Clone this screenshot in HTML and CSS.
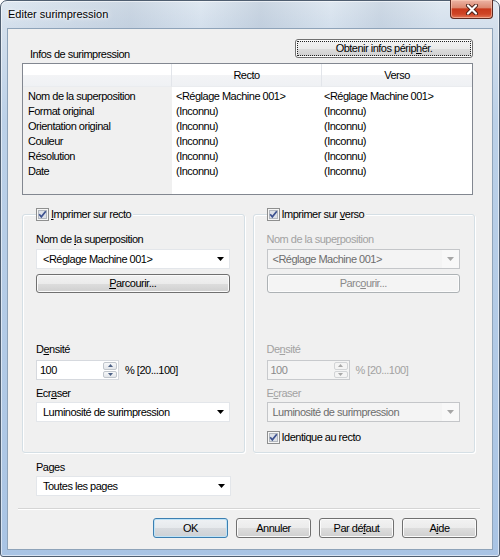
FILE: index.html
```html
<!DOCTYPE html>
<html lang="fr">
<head>
<meta charset="utf-8">
<title>Editer surimpression</title>
<link rel="stylesheet" href="styles.css">
</head>
<body>
<div class="window">
  <div class="titlebar">
    <span class="title">Editer surimpression</span>
    <div class="close">
      <svg width="14" height="11" viewBox="0 0 14 11"><path d="M3 1.5 L11 9.5 M11 1.5 L3 9.5" stroke="#4a1f17" stroke-width="4" stroke-linecap="round" fill="none"/><path d="M3 1.5 L11 9.5 M11 1.5 L3 9.5" stroke="#ffffff" stroke-width="2.2" stroke-linecap="round" fill="none"/></svg>
    </div>
  </div>
  <div class="client">
    <div class="info">
      <div class="info-head">
        <span class="info-label">Infos de surimpression</span>
        <button class="btn focus wide">Obtenir infos périp<u>h</u>ér.</button>
      </div>
      <div class="table">
        <div class="col col-labels">
          <div class="th"></div>
          <div class="tbody">
            <div class="td">Nom de la superposition</div>
            <div class="td">Format original</div>
            <div class="td">Orientation original</div>
            <div class="td">Couleur</div>
            <div class="td">Résolution</div>
            <div class="td">Date</div>
          </div>
        </div>
        <div class="col col-recto">
          <div class="th">Recto</div>
          <div class="tbody">
            <div class="td">&lt;Réglage Machine 001&gt;</div>
            <div class="td">(Inconnu)</div>
            <div class="td">(Inconnu)</div>
            <div class="td">(Inconnu)</div>
            <div class="td">(Inconnu)</div>
            <div class="td">(Inconnu)</div>
          </div>
        </div>
        <div class="col col-verso">
          <div class="th">Verso</div>
          <div class="tbody">
            <div class="td">&lt;Réglage Machine 001&gt;</div>
            <div class="td">(Inconnu)</div>
            <div class="td">(Inconnu)</div>
            <div class="td">(Inconnu)</div>
            <div class="td">(Inconnu)</div>
            <div class="td">(Inconnu)</div>
          </div>
        </div>
      </div>
    </div>

    <div class="groups">
      <div class="group">
        <div class="legend">
          <svg class="cb" width="13" height="13" viewBox="0 0 13 13"><rect x="0.5" y="0.5" width="12" height="12" fill="#f6f6f6" stroke="#8e8f8f"/><rect x="2.5" y="2.5" width="8" height="8" fill="#dde1e7" stroke="#b3b8bf"/><path d="M3.2 6.3 L5.3 8.8 L9.8 3.2" stroke="#3d5290" stroke-width="1.7" fill="none"/></svg>
          <span><u>I</u>mprimer sur recto</span>
        </div>
        <div class="lbl">Nom de <u>l</u>a superposition</div>
        <div class="combo">
          <span class="combo-text">&lt;Réglage Machine 001&gt;</span>
          <svg class="arrow" width="7" height="4" viewBox="0 0 7 4"><polygon points="0,0 7,0 3.5,4" fill="#000"/></svg>
        </div>
        <button class="btn full"><u>P</u>arcourir...</button>
        <div class="lbl lbl-dens">D<u>e</u>nsité</div>
        <div class="spin-row">
          <div class="spin">
            <span class="spin-val">100</span>
            <div class="spin-btns">
              <div class="sb"><svg width="5" height="3" viewBox="0 0 5 3"><polygon points="0,3 5,3 2.5,0" fill="#4d6185"/></svg></div>
              <div class="sb"><svg width="5" height="3" viewBox="0 0 5 3"><polygon points="0,0 5,0 2.5,3" fill="#4d6185"/></svg></div>
            </div>
          </div>
          <span class="unit">% [20...100]</span>
        </div>
        <div class="lbl lbl-ecr">Ecr<u>a</u>ser</div>
        <div class="combo combo-tight">
          <span class="combo-text">Luminosité de surimpression</span>
          <svg class="arrow" width="7" height="4" viewBox="0 0 7 4"><polygon points="0,0 7,0 3.5,4" fill="#000"/></svg>
        </div>
      </div>

      <div class="group group-right">
        <div class="legend">
          <svg class="cb" width="13" height="13" viewBox="0 0 13 13"><rect x="0.5" y="0.5" width="12" height="12" fill="#f6f6f6" stroke="#8e8f8f"/><rect x="2.5" y="2.5" width="8" height="8" fill="#dde1e7" stroke="#b3b8bf"/><path d="M3.2 6.3 L5.3 8.8 L9.8 3.2" stroke="#3d5290" stroke-width="1.7" fill="none"/></svg>
          <span>Imprimer sur <u>v</u>erso</span>
        </div>
        <div class="lbl dis">Nom de la supe<u>r</u>position</div>
        <div class="combo disabled">
          <span class="combo-text">&lt;Réglage Machine 001&gt;</span>
          <span class="arrow-box"><svg width="7" height="4" viewBox="0 0 7 4"><polygon points="0,0 7,0 3.5,4" fill="#a6a6a6"/></svg></span>
        </div>
        <button class="btn full disabled">Parc<u>o</u>urir...</button>
        <div class="lbl lbl-dens dis">De<u>n</u>sité</div>
        <div class="spin-row">
          <div class="spin disabled">
            <span class="spin-val">100</span>
            <div class="spin-btns">
              <div class="sb"><svg width="5" height="3" viewBox="0 0 5 3"><polygon points="0,3 5,3 2.5,0" fill="#a8a8a8"/></svg></div>
              <div class="sb"><svg width="5" height="3" viewBox="0 0 5 3"><polygon points="0,0 5,0 2.5,3" fill="#a8a8a8"/></svg></div>
            </div>
          </div>
          <span class="unit dis">% [20...100]</span>
        </div>
        <div class="lbl lbl-ecr dis">E<u>c</u>raser</div>
        <div class="combo combo-tight disabled">
          <span class="combo-text">Luminosité de surimpression</span>
          <span class="arrow-box"><svg width="7" height="4" viewBox="0 0 7 4"><polygon points="0,0 7,0 3.5,4" fill="#a6a6a6"/></svg></span>
        </div>
        <div class="check-row">
          <svg class="cb" width="13" height="13" viewBox="0 0 13 13"><rect x="0.5" y="0.5" width="12" height="12" fill="#f6f6f6" stroke="#8e8f8f"/><rect x="2.5" y="2.5" width="8" height="8" fill="#dde1e7" stroke="#b3b8bf"/><path d="M3.2 6.3 L5.3 8.8 L9.8 3.2" stroke="#3d5290" stroke-width="1.7" fill="none"/></svg>
          <span>Identique au recto</span>
        </div>
      </div>
    </div>

    <div class="pages">
      <div class="lbl-pages">Pa<u>g</u>es</div>
      <div class="combo combo-tight">
        <span class="combo-text">Toutes les pages</span>
        <svg class="arrow" width="7" height="4" viewBox="0 0 7 4"><polygon points="0,0 7,0 3.5,4" fill="#000"/></svg>
      </div>
    </div>

    <div class="separator"></div>

    <div class="actions">
      <button class="btn act default">OK</button>
      <button class="btn act">Annuler</button>
      <button class="btn act">Par dé<u>f</u>aut</button>
      <button class="btn act">A<u>i</u>de</button>
    </div>
  </div>
</div>
</body>
</html>
```

FILE: styles.css
```css
* { box-sizing: border-box; }

html, body {
  margin: 0;
  padding: 0;
}

body {
  width: 500px;
  height: 560px;
  background: #ffffff;
  font-family: "Liberation Sans", Arial, sans-serif;
  font-size: 11px;
  letter-spacing: -0.5px;
  color: #000;
  overflow: hidden;
}

u { text-decoration: underline; text-underline-offset: 1px; }

.window {
  width: 500px;
  height: 557px;
  border: 1px solid #4f5e70;
  border-radius: 7px 7px 3px 3px;
  background:
    linear-gradient(90deg, rgba(255,255,255,0) 0, rgba(120,140,165,0.18) 130px, rgba(255,255,255,0) 200px, rgba(120,140,165,0.2) 260px, rgba(255,255,255,0) 330px, rgba(120,140,165,0.16) 380px, rgba(255,255,255,0) 440px) top / 100% 27px no-repeat,
    linear-gradient(180deg, #dfe8f1 0, #d3dfec 28px, #bcd1e8 120px, #a9c4e4 100%);
  box-shadow: inset 0 0 0 1px rgba(255,255,255,0.55);
  padding: 0 6px 6px 6px;
  display: flex;
  flex-direction: column;
}

.titlebar {
  height: 27px;
  flex: none;
  display: flex;
  align-items: flex-start;
}

.title {
  padding: 6px 0 0 1px;
  font-size: 11px;
  line-height: 14px;
  letter-spacing: 0;
  color: #000;
  text-shadow: 0 0 6px #fff, 0 0 3px #fff;
}

.close {
  margin-left: auto;
  margin-top: -1px;
  width: 43px;
  height: 19px;
  border: 1px solid #5e2a21;
  border-top: none;
  border-radius: 0 0 4px 4px;
  background: linear-gradient(180deg, #ecb4a5 0%, #dd8a72 42%, #c8391c 50%, #cf4526 78%, #e27657 100%);
  box-shadow: inset 0 0 0 1px rgba(255,210,190,0.55);
  display: flex;
  align-items: center;
  justify-content: center;
}

.client {
  flex: 1;
  background: #f0f0f0;
  border: 1px solid #8ea3b9;
  display: flex;
  flex-direction: column;
}

/* ---------- info section ---------- */
.info {
  margin: 10px 19px 0 14px;
}

.info-head {
  height: 24px;
  display: flex;
  justify-content: space-between;
  align-items: flex-start;
}

.info-label {
  padding: 9px 0 0 8px;
  line-height: 12px;
}

.table {
  height: 132px;
  border: 1px solid #828790;
  background: #ffffff;
  display: flex;
}

.col { display: flex; flex-direction: column; }
.col-labels { width: 149px; background: #f0f0f0; }
.col-recto { width: 150px; }
.col-verso { flex: 1; }

.th {
  height: 23px;
  flex: none;
  background: linear-gradient(180deg, #ffffff 0%, #ffffff 50%, #f3f4f6 51%, #eff1f4 100%);
  border-right: 1px solid #e2e5ea;
  border-bottom: 1px solid #eaecef;
  text-align: center;
  line-height: 22px;
}
.col-verso .th { border-right: none; }

.tbody { padding-top: 2px; }

.td {
  line-height: 15px;
  white-space: nowrap;
}
.col-labels .td { padding-left: 5px; }
.col-recto .td { padding-left: 4px; }
.col-verso .td { padding-left: 2px; }

/* ---------- groups ---------- */
.groups {
  display: flex;
  gap: 8px;
  margin: 19px 17px 0 14px;
}

.group {
  flex: 1;
  height: 239px;
  border: 1px solid #d5dfe5;
  border-radius: 3px;
  box-shadow: inset 1px 1px 0 #ffffff, 1px 1px 0 #ffffff;
  padding: 0 14px 0 13px;
  display: flex;
  flex-direction: column;
}

.legend {
  align-self: flex-start;
  margin-top: -7px;
  height: 13px;
  display: flex;
  align-items: center;
  gap: 2px;
  padding-right: 2px;
  background: #f0f0f0;
  line-height: 13px;
}

.cb { flex: none; display: block; }

.lbl {
  line-height: 12px;
  margin-top: 12px;
}
.lbl-dens { margin-top: 50px; }
.lbl-ecr { margin-top: 7px; }
.dis { color: #a2a2a2; }

.combo {
  height: 20px;
  margin-top: 4px;
  background: #ffffff;
  border: 1px solid #e3e6ea;
  display: flex;
  align-items: center;
  padding-left: 6px;
}
.combo-tight { margin-top: 3px; }
.combo-text { flex: 1; white-space: nowrap; }
.arrow { margin-right: 5px; display: block; }

.combo.disabled {
  background: #f4f4f4;
  border-color: #c4c6c9;
  color: #6d6d6d;
  padding-left: 5px;
}
.arrow-box {
  width: 17px;
  align-self: stretch;
  display: flex;
  align-items: center;
  justify-content: center;
  background: #f8f8f8;
}

/* ---------- buttons ---------- */
.btn {
  font: inherit;
  letter-spacing: inherit;
  color: #000;
  height: 19px;
  padding: 0;
  margin: 0;
  border: 1px solid #707070;
  border-radius: 3px;
  background: linear-gradient(180deg, #f2f2f2 0%, #ebebeb 50%, #dddddd 51%, #cfcfcf 100%);
  box-shadow: inset 0 0 0 1px #fbfbfb;
  text-align: center;
  line-height: 17px;
  white-space: nowrap;
}
.wide { width: 178px; }
.focus { outline: 1px dotted #222; outline-offset: -3px; }
.full { width: 100%; margin-top: 5px; }
.btn.disabled {
  border-color: #adb2b5;
  background: #f4f4f4;
  box-shadow: inset 0 0 0 1px #fcfcfc;
  color: #8a8a8a;
}

/* ---------- spinner ---------- */
.spin-row {
  display: flex;
  align-items: center;
  margin-top: 5px;
  height: 20px;
}
.spin {
  width: 83px;
  height: 20px;
  border: 1px solid #d6d9de;
  background: #ffffff;
  display: flex;
}
.spin-val { flex: 1; padding-left: 3px; line-height: 18px; }
.spin-btns {
  width: 15px;
  padding: 1px 1px 1px 0;
  display: flex;
  flex-direction: column;
  gap: 1px;
}
.sb {
  flex: 1;
  border: 1px solid #c1c6cc;
  border-radius: 2px;
  background: linear-gradient(180deg, #f7f8f9, #e3e6ea);
  display: flex;
  align-items: center;
  justify-content: center;
}
.sb svg { display: block; }
.spin.disabled { background: #f4f4f4; border-color: #c8cacd; color: #8a8a8a; }
.spin.disabled .sb { border-color: #d2d4d6; background: #f4f4f4; }
.unit { margin-left: 6px; }

.check-row {
  margin-top: 9px;
  height: 13px;
  display: flex;
  align-items: center;
  gap: 2px;
  line-height: 13px;
}

/* ---------- pages ---------- */
.pages {
  margin: 8px 0 0 28px;
  width: 195px;
}
.lbl-pages { line-height: 12px; }

.separator {
  margin: 12px 12px 0 10px;
  height: 2px;
  border-top: 1px solid #d5d5d5;
  border-bottom: 1px solid #ffffff;
}

.actions {
  margin: 8px 15px 0 0;
  display: flex;
  justify-content: flex-end;
  gap: 8px;
}
.act { width: 75px; height: 20px; line-height: 18px; }
.default {
  border-color: #3c7fb1;
  box-shadow: inset 0 0 0 1px #bfe3f7;
  background: linear-gradient(180deg, #eef1f4 0%, #e6e9ec 50%, #d8dbdf 51%, #cdd1d5 100%);
}
```
